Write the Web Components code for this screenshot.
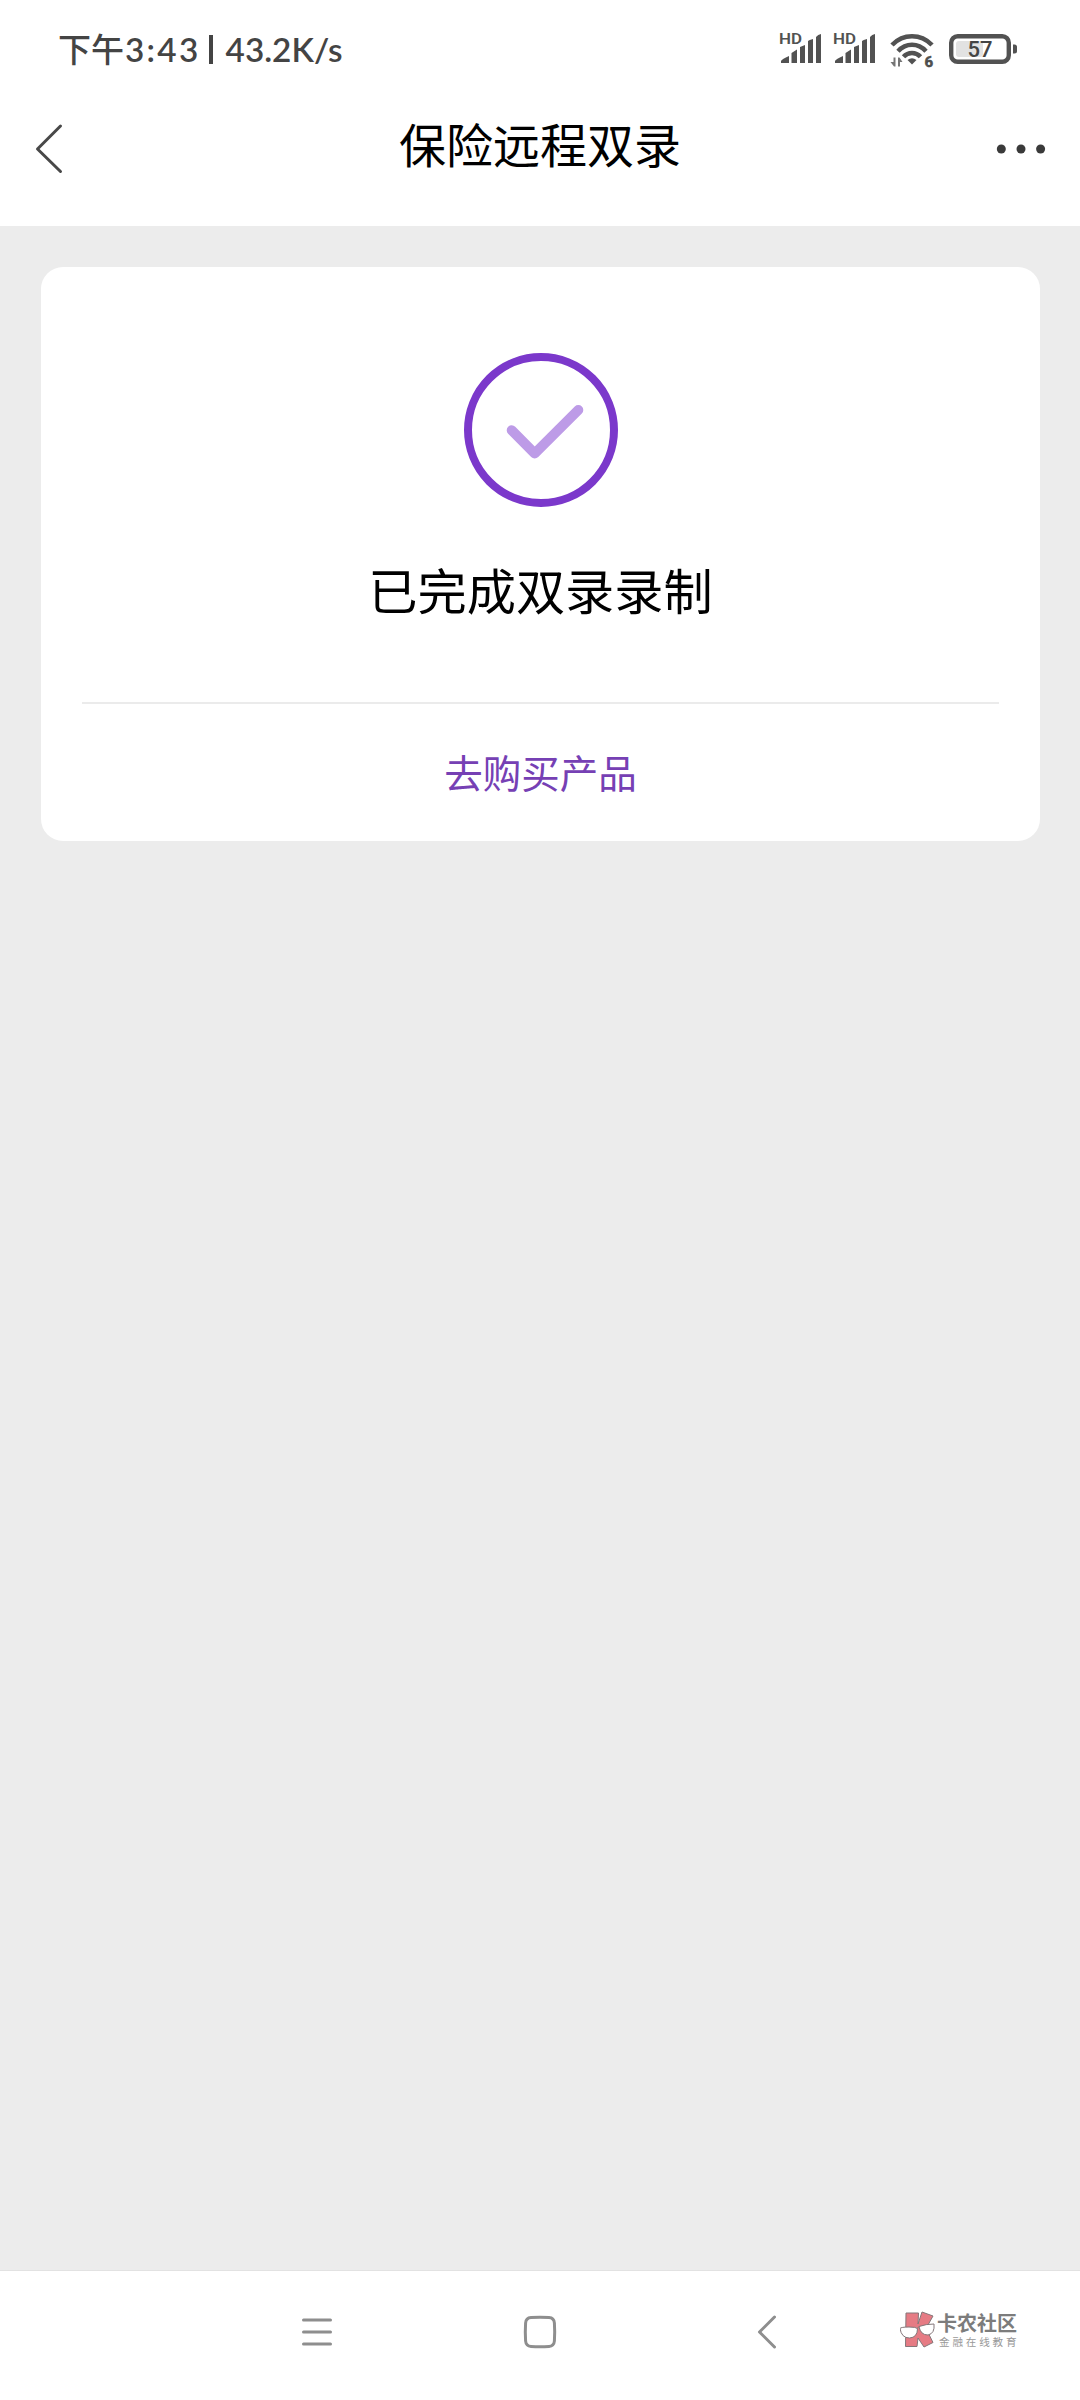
<!DOCTYPE html>
<html lang="zh-CN">
<head>
<meta charset="utf-8">
<title>保险远程双录</title>
<style>
    html, body {
      margin: 0;
      background: #ececec;
      font-family: "Noto Sans CJK SC", sans-serif;
    }

    phone-screen {
      width: 1080px;
      height: 2400px;
    }
</style>
</head>
<body>
<phone-screen>
    <status-bar slot="top" time="3:43" speed="43.2K/s"></status-bar>
    <title-bar slot="top">保险远程双录</title-bar>
    <result-card>
        已完成双录录制
        <span slot="action">去购买产品</span>
    </result-card>
    <nav-bar slot="bottom"><brand-mark></brand-mark></nav-bar>
</phone-screen>

<script>
class PhoneScreen extends HTMLElement {
    constructor() {
        super();
        this.attachShadow({ mode: 'open' });
        this.shadowRoot.innerHTML = `
        <style>
            :host {
              display: flex;
              flex-direction: column;
              overflow: hidden;
              background: #ececec;
            }

            main {
              flex: 1;
              padding: 41px 40px 0 41px;
            }
        </style>

        <slot name="top"></slot>
        <main><slot></slot></main>
        <slot name="bottom"></slot>
    `;
    }
}

class StatusBar extends HTMLElement {
    constructor() {
        super();
        this.attachShadow({ mode: 'open' });
        this.shadowRoot.innerHTML = `
        <style>
            :host {
              display: flex;
              justify-content: space-between;
              box-sizing: border-box;
              height: 100px;
              padding: 20px 50px 0 58px;
              background: white;
              color: #444;
            }

            .info {
              display: flex;
              align-items: baseline;
              height: 56px;
              line-height: 56px;
              font-size: 33px;
              font-weight: 500;
              white-space: pre;
            }

            .latin {
              font-family: Lato, sans-serif;
              font-size: 33.3px;
              font-weight: 600;
            }

            .time {
              margin-left: 1px;
              letter-spacing: 2.3px;
            }

            .rule {
              align-self: center;
              width: 4px;
              height: 29px;
              margin: 2px 13px 0 8px;
              background: #444;
            }

            svg {
              display: block;
            }

            text {
              font-family: Roboto, sans-serif;
            }
        </style>

        <div class="info"><span>下午</span><span class="latin time"></span><i class="rule"></i><span class="latin speed"></span></div>
        <svg width="260" height="60" viewBox="770 20 260 60" fill="#525252">
            <defs>
                <g id="signal">
                    <text x="779" y="44" font-size="15" font-weight="600" textLength="23" lengthAdjust="spacingAndGlyphs">HD</text>
                    <path d="M781 63v-2q1-2 8-5v7z M791.500 63v-10l5.500-3.500v13.500z M800 63v-16l5-2v18z M808 63v-22q1-1 5-2v24z M816 63v-26q2-2.500 5-3v29z"/>
                </g>
            </defs>
            <use href="#signal"/>
            <use href="#signal" x="54"/>
            <g fill="none" stroke="#525252" stroke-width="4.600">
                <path d="M892 45Q900.500 36.300 912 36.300T932 45"/>
                <path d="M898 51.200Q904 44.800 912 44.800T926 51.200"/>
                <path d="M903.500 56.800Q907 53 912 53T920.500 56.800"/>
            </g>
            <path d="M907.500 60q4.500-3.500 9 0l-4.500 4.500z"/>
            <path d="M895.500 57.500v9h-1.500l-3.500-4.500h3v-4.500zM898 66.500v-9h1.500l3 4.500h-2.500v4.500z" opacity=".8"/>
            <text x="924.500" y="66.700" font-size="15" font-weight="800" stroke="#444" stroke-width=".4">6</text>
            <rect x="956" y="41" width="27" height="16" rx="3" fill="#e2e2e2"/>
            <rect x="951.200" y="36.200" width="57.600" height="25.600" rx="6.500" fill="none" stroke="#525252" stroke-width="4.400"/>
            <path d="M1013 44.500h1.500q2.500 0 2.500 2.500v4q0 2.500-2.500 2.500h-1.500z"/>
            <text x="967.500" y="57.300" font-size="22" font-weight="500" fill="#444">57</text>
        </svg>
    `;
    }

    connectedCallback() {
        this.shadowRoot.querySelector('.time').textContent = this.getAttribute('time');
        this.shadowRoot.querySelector('.speed').textContent = this.getAttribute('speed');
    }
}

class TitleBar extends HTMLElement {
    constructor() {
        super();
        this.attachShadow({ mode: 'open' });
        this.shadowRoot.innerHTML = `
        <style>
            :host {
              display: grid;
              grid-template-columns: 100px 1fr 100px;
              align-items: center;
              box-sizing: border-box;
              height: 126px;
              padding-bottom: 28px;
              background: white;
            }

            h1 {
              margin: 0;
              padding-bottom: 13px;
              font-size: 47px;
              font-weight: 400;
              line-height: 60px;
              text-align: center;
              color: black;
            }

            svg {
              display: block;
            }
        </style>

        <svg width="100" height="98" fill="none" stroke="#484848" stroke-width="3" stroke-linecap="round" stroke-linejoin="round">
            <path d="M60.500 26L37.500 49l23 22.500"/>
        </svg>
        <h1><slot></slot></h1>
        <svg width="100" height="98" fill="#3a3a3a">
            <circle cx="21.300" cy="49" r="4.500"/>
            <circle cx="41" cy="49" r="4.500"/>
            <circle cx="60.600" cy="49" r="4.500"/>
        </svg>
    `;
    }
}

class ResultCard extends HTMLElement {
    constructor() {
        super();
        this.attachShadow({ mode: 'open' });
        this.shadowRoot.innerHTML = `
        <style>
            :host {
              display: flex;
              flex-direction: column;
              box-sizing: border-box;
              height: 574px;
              padding: 86px 41px 0;
              border-radius: 22px;
              background: white;
              text-align: center;
            }

            svg {
              display: block;
              margin: 0 auto;
            }

            .message {
              height: 70px;
              margin-top: 47px;
              font-size: 49.2px;
              line-height: 70px;
              color: black;
            }

            .action {
              flex: 1;
              margin-top: 78px;
              border-top: 2px solid #ebebeb;
              font-size: 38.5px;
              line-height: 135px;
              color: #7640b4;
            }
        </style>

        <svg width="154" height="154" fill="none">
            <circle cx="77" cy="77" r="73" stroke="#7b38cb" stroke-width="8"/>
            <path d="M47.700 77.300l23 23.200 43.600-43.500" stroke="#bd9be7" stroke-width="10" stroke-linecap="round" stroke-linejoin="round"/>
        </svg>
        <div class="message"><slot></slot></div>
        <div class="action"><slot name="action"></slot></div>
    `;
    }
}

class NavBar extends HTMLElement {
    constructor() {
        super();
        this.attachShadow({ mode: 'open' });
        this.shadowRoot.innerHTML = `
        <style>
            :host {
              display: flex;
              align-items: center;
              box-sizing: border-box;
              height: 130px;
              padding: 0 60px 7px 297px;
              border-top: 1px solid #e2e2e2;
              background: white;
            }

            svg {
              fill: none;
              stroke: #8e8e8e;
              stroke-width: 3;
              stroke-linecap: round;
              stroke-linejoin: round;
            }

            .home {
              margin-left: 183px;
            }

            .back {
              margin-left: 187px;
            }

            slot {
              display: block;
              margin-left: auto;
            }
        </style>

        <svg width="40" height="40"><path d="M6.500 8h27M6.500 20h27M6.500 32h27"/></svg>
        <svg class="home" width="40" height="40"><path d="M11 5.600q9-.6 18 0 5 .4 5.400 5.400.6 9 0 18-.4 5-5.400 5.400-9 .6-18 0-5-.4-5.400-5.400-.6-9 0-18 .4-5 5.400-5.400z"/></svg>
        <svg class="back" width="40" height="40"><path d="M27.500 5L12.500 20l15 15"/></svg>
        <slot></slot>
    `;
    }
}

class BrandMark extends HTMLElement {
    constructor() {
        super();
        this.attachShadow({ mode: 'open' });
        this.shadowRoot.innerHTML = `
        <style>
            :host {
              display: flex;
              align-items: center;
              gap: 1px;
              width: 120px;
              margin-top: -4px;
              color: #7c7c7c;
            }

            svg {
              flex: none;
            }

            b, small {
              display: block;
              white-space: nowrap;
            }

            b {
              font-size: 20px;
              font-weight: 700;
              line-height: 22px;
            }

            small {
              padding-left: 2px;
              font-size: 10.6px;
              letter-spacing: 2.800px;
              line-height: 15px;
              color: #999;
            }
        </style>

        <svg width="36" height="38" viewBox="0 -1 36 38" stroke="#85777a" stroke-width="1">
            <path d="M6 1h12.500l-.5 11L22 0l11 4-7 12.500 7 14L24 35l-6-9-1 8.500H5.500z" fill="#e67b84"/>
            <path d="M0 16.500q1-1.500 9-1.500 7 0 8.500 1.500 0 9-8 9.500-8 0-9.500-9.500z" fill="white"/>
            <path d="M19 14.500q7-2.500 15-2.500 1 9.500-6 11-7.500 0-9-8.500z" fill="white"/>
            <path d="M17 16.500l2-2"/>
        </svg>
        <div><b>卡农社区</b><small>金融在线教育</small></div>
    `;
    }
}

customElements.define('phone-screen', PhoneScreen);
customElements.define('status-bar', StatusBar);
customElements.define('title-bar', TitleBar);
customElements.define('result-card', ResultCard);
customElements.define('nav-bar', NavBar);
customElements.define('brand-mark', BrandMark);
</script>
</body>
</html>
